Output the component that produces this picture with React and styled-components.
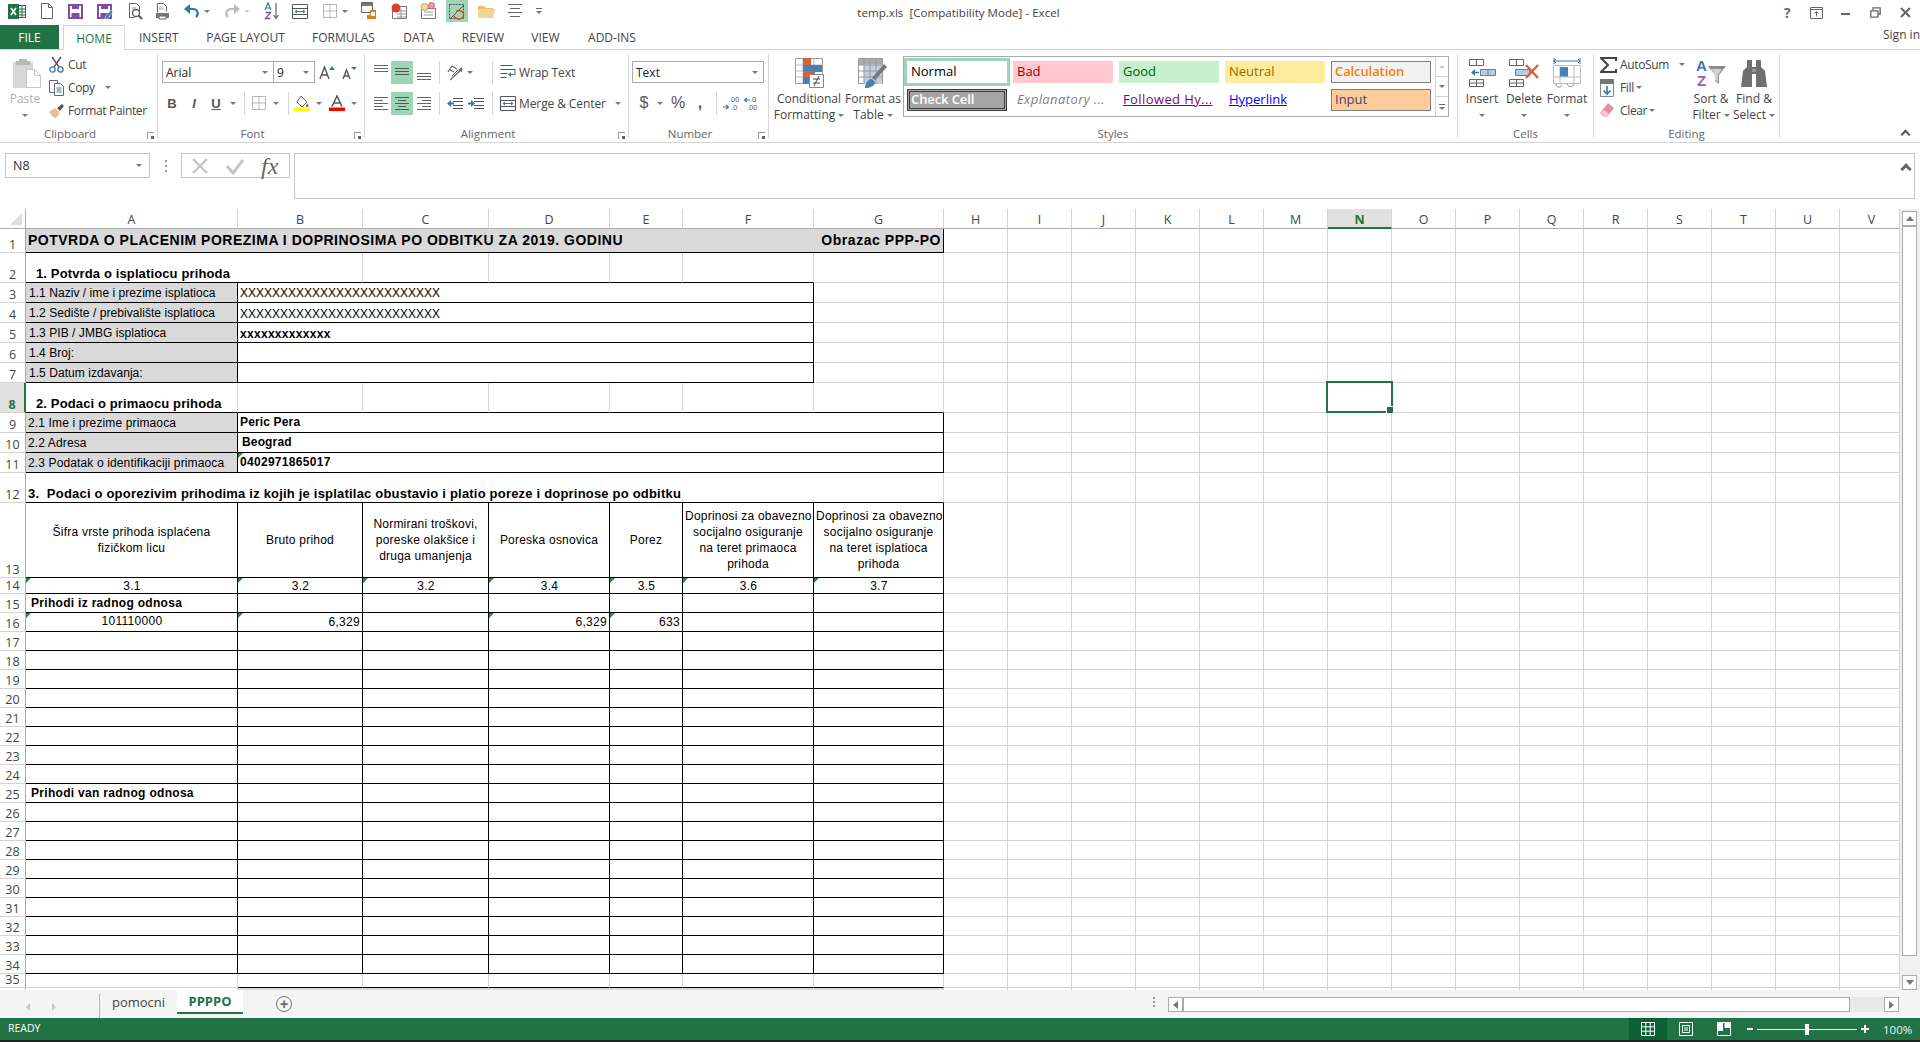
import React from "react";
import styled, { createGlobalStyle } from "styled-components";

const UI = `"Open Sans", "Noto Sans", sans-serif`;
const SHEET = `"Liberation Sans", Arial, sans-serif`;
const GREEN = "#217346";
const ACTIVE = "#9fd5b7";
const LINE = "#d4d4d4";

const GlobalStyle = createGlobalStyle`
  html, body { margin: 0; padding: 0; background: #fff; overflow: hidden; }
  * { box-sizing: border-box; }
`;

/* ---------- icons ---------- */
const Svg = styled.svg`
  display: block;
  flex: none;
`;
const Ic = ({ w = 16, h = 16, children }) => (
  <Svg width={w} height={h} viewBox={`0 0 ${w} ${h}`} fill="none">
    {children}
  </Svg>
);

const ExcelLogo = () => (
  <Ic w={18} h={15}>
    <rect x="7.5" y="1.5" width="10" height="12" fill="#fff" stroke="#217346" />
    <path d="M11 5h6M11 8h6M11 11h6M14 2v11" stroke="#217346" />
    <rect x="0" y="0" width="11" height="15" fill="#217346" />
    <path d="M3 4l5 7M8 4l-5 7" stroke="#fff" strokeWidth="1.7" />
  </Ic>
);
const NewPage = () => (
  <Ic w={12} h={16}>
    <path d="M.5.5h7l4 4v11H.5z M7.5.5v4h4" stroke="#666" fill="#fff" />
  </Ic>
);
const SaveIc = ({ pen }) => (
  <Ic w={16} h={15}>
    <path d="M1 1h13v13H1z" stroke="#7e4ea3" strokeWidth="2" fill="#fff" />
    <path d="M4 1h7v4H4z M3.5 9h8v5h-8z" fill="#7e4ea3" />
    {pen && <path d="M8 13l6-7 2 2-6 7H8z" fill="#3a76b5" stroke="#fff" strokeWidth=".5" />}
  </Ic>
);
const PreviewIc = () => (
  <Ic w={15} h={17}>
    <path d="M1.5.5h7l3 3v6 M1.5.5v14h5" stroke="#666" fill="#fff" />
    <circle cx="8" cy="10" r="3.5" stroke="#555" strokeWidth="1.3" fill="#fff" />
    <path d="M10.5 12.5l3.5 3.5" stroke="#555" strokeWidth="2" />
    <path d="M4 5h4M4 7h2" stroke="#999" />
  </Ic>
);
const PrintIc = () => (
  <Ic w={16} h={17}>
    <path d="M2.5.5h6l3 3v5 M2.5.5v9" stroke="#666" />
    <path d="M1 10h13v5H1z" fill="#777" />
    <path d="M4 13h7v3H4z" fill="#fff" stroke="#666" />
    <path d="M4 4h4M4 6h5" stroke="#aaa" />
  </Ic>
);
const UndoIc = ({ c = "#2e75b6" }) => (
  <Ic w={16} h={14}>
    <path d="M3 5h6a4.5 4.5 0 0 1 3 8" stroke={c} strokeWidth="2.2" />
    <path d="M6 0v10L0 5z" fill={c} />
  </Ic>
);
const RedoIc = () => (
  <Ic w={16} h={14}>
    <path d="M13 5H7a4.5 4.5 0 0 0-3 8" stroke="#bcbcbc" strokeWidth="2.2" />
    <path d="M10 0v10l6-5z" fill="#bcbcbc" />
  </Ic>
);
const SortAz = () => (
  <Ic w={16} h={18}>
    <path d="M1 8l3-7 3 7M2.2 6h3.6" stroke="#3a76b5" strokeWidth="1.2" />
    <path d="M1.5 10.5h5L1.5 16.5h5" stroke="#7e4ea3" strokeWidth="1.3" />
    <path d="M12 1v15M9.5 13l2.5 3.5 2.5-3.5" stroke="#666" strokeWidth="1.2" />
  </Ic>
);
const MergeIc = () => (
  <Ic w={16} h={15}>
    <path d="M.5.5h15v14H.5zM.5 4.5h15M.5 10.5h15" stroke="#555" />
    <path d="M3 7.5h10" stroke="#3a76b5" />
    <path d="M5 5.5l-2.5 2 2.5 2zM11 5.5l2.5 2-2.5 2z" fill="#3a76b5" />
  </Ic>
);
const BorderIc = () => (
  <Ic w={14} h={14}>
    <path d="M.5.5h13v13H.5zM7 .5v13M.5 7h13" stroke="#777" strokeDasharray="1 1" />
  </Ic>
);
const QatPhone = () => (
  <Ic w={16} h={18}>
    <path d="M.5.5h11v10H.5z" stroke="#666" fill="#fff" />
    <path d="M1 1h10v3H1z" fill="#777" />
    <path d="M9 8h6v9H6v-4h3z" fill="#e07b1a" />
    <path d="M10 10h4v4h-4z" fill="#fff" />
  </Ic>
);
const QatSheet = () => (
  <Ic w={17} h={17}>
    <path d="M1.5 3.5h14v12h-14z" stroke="#777" fill="#fff" />
    <path d="M6 8h9M6 11h9M6 14h9M10 6v9" stroke="#999" />
    <circle cx="5" cy="5" r="4.5" fill="#d5452c" />
  </Ic>
);
const QatBalloons = () => (
  <Ic w={17} h={18}>
    <path d="M1.5 6.5h14v10h-14z" stroke="#777" fill="#fff" />
    <path d="M4 10h9M4 13h9" stroke="#999" />
    <circle cx="4.5" cy="5" r="3.5" fill="#f1d6a6" stroke="#c9a264" />
    <circle cx="11.5" cy="3.5" r="3" fill="#e9a0ae" stroke="#c66" />
  </Ic>
);
const QatShape = () => (
  <Ic w={18} h={17}>
    <path d="M1.5 1.5h14v14h-14z" stroke="#555" strokeDasharray="2 1" />
    <path d="M2 16L16 2" stroke="#555" />
    <path d="M8 8c6-2 10 3 6 7-3 2-7 1-8-2" stroke="#d5452c" strokeWidth="1.3" />
  </Ic>
);
const FolderIc = () => (
  <Ic w={17} h={14}>
    <path d="M0 2h6l2 2h7v2H0z" fill="#e7bf71" />
    <path d="M0 5h17l-2 9H0z" fill="#f2d595" />
  </Ic>
);
const LinesIc = ({ rows, active }) => (
  <Ic w={14} h={16}>
    {rows.map(([x1, x2, y], i) => (
      <path key={i} d={`M${x1} ${y}.5H${x2}`} stroke={active ? "#555" : "#666"} />
    ))}
  </Ic>
);
const V_TOP = [[0, 14, 1], [0, 14, 4], [0, 14, 7]];
const V_MID = [[0, 14, 4], [0, 14, 7], [0, 14, 10]];
const V_BOT = [[0, 14, 9], [0, 14, 12], [0, 14, 15]];
const H_LEFT = [[0, 14, 2], [0, 9, 5], [0, 14, 8], [0, 9, 11], [0, 14, 14]];
const H_CENTER = [[0, 14, 2], [3, 11, 5], [0, 14, 8], [3, 11, 11], [0, 14, 14]];
const H_RIGHT = [[0, 14, 2], [5, 14, 5], [0, 14, 8], [5, 14, 11], [0, 14, 14]];

const ScissorsIc = () => (
  <Ic w={15} h={17}>
    <path d="M3 1l7 10M12 1L5 11" stroke="#555" strokeWidth="1.4" />
    <circle cx="3.5" cy="13.5" r="2.6" stroke="#3a76b5" strokeWidth="1.3" />
    <circle cx="11.5" cy="13.5" r="2.6" stroke="#3a76b5" strokeWidth="1.3" />
  </Ic>
);
const CopyIc = () => (
  <Ic w={16} h={16}>
    <path d="M.5.5h8v12h-8z" stroke="#666" fill="#fff" />
    <path d="M5.5 3.5h6l3 3v9h-9z" stroke="#666" fill="#fff" />
    <path d="M7.5 8h5M7.5 10h5M7.5 12h5" stroke="#3a76b5" />
  </Ic>
);
const PainterIc = () => (
  <Ic w={16} h={15}>
    <path d="M0 9l6-4 5 5-4 5-3-1-2-3z" fill="#e6c08e" />
    <path d="M8 5l5-4 2 2-4 5z" fill="#555" />
  </Ic>
);
const PasteIc = () => (
  <Ic w={28} h={30}>
    <path d="M0 4h20v26H0z" fill="#d8d6d6" />
    <path d="M6 1h8v2h3v4H3V3h3z" fill="#b9b7b7" />
    <path d="M13.5 11.5h8l6 6v12h-14z" fill="#fff" stroke="#c6c6c6" />
    <path d="M21.5 11.5v6h6" stroke="#c6c6c6" />
  </Ic>
);
const FontGrow = ({ small }) => (
  <Ic w={16} h={15}>
    <path
      d={small ? "M2 14l3.5-9 3.5 9M3.3 11h4.4" : "M1 14l4.5-12L10 14M2.8 10h5.4"}
      stroke="#555"
      strokeWidth="1.4"
    />
    <path d={small ? "M10 2h6l-3 3z" : "M10 5l3-4 3 4z"} fill="#3a76b5" />
  </Ic>
);
const FillIc = () => (
  <Ic w={16} h={16}>
    <path d="M7 1l6 6-5 5-5-5z" stroke="#666" fill="#fff" />
    <path d="M13 8c1.5 2 2 3 1 4s-2 0-2-1z" fill="#3a76b5" />
    <path d="M0 12.5h16V16H0z" fill="#ffff00" />
  </Ic>
);
const ColorA = () => (
  <Ic w={16} h={16}>
    <path d="M3 11.5L8 1l5 10.5M4.8 8h6.4" stroke="#555" strokeWidth="1.5" />
    <path d="M0 12.5h16V16H0z" fill="#ff0000" />
  </Ic>
);
const OrientIc = () => (
  <Ic w={17} h={17}>
    <path d="M1 8l4-6 5 3M3 6l4 2" stroke="#666" strokeWidth="1.2" />
    <path d="M5 12l6-6" stroke="#666" />
    <path d="M3 16L15 5" stroke="#666" strokeWidth="1.2" />
    <path d="M15 3v5l-4-2z" fill="#666" />
  </Ic>
);
const WrapIc = () => (
  <Ic w={16} h={16}>
    <path d="M.5 1.5h12M.5 5.5h15M.5 9.5h7M.5 13.5h6" stroke="#555" />
    <path d="M15 5.5v5h-5" stroke="#3a76b5" />
    <path d="M11 8l-3 2.5 3 2.5z" fill="#3a76b5" />
  </Ic>
);
const IndentIc = ({ inc }) => (
  <Ic w={16} h={13}>
    <path d="M6 1.5h10M6 4.5h10M6 8.5h10M6 11.5h10" stroke="#555" />
    {inc ? (
      <path d="M0 5.5h3V3l4 3.5L3 10V7.5H0z" fill="#3a76b5" />
    ) : (
      <path d="M7 5.5H4V3L0 6.5 4 10V7.5h3z" fill="#3a76b5" />
    )}
  </Ic>
);
const DecimalIc = ({ more }) => (
  <Ic w={16} h={15}>
    <text x="6" y="6" fontSize="7.5" fill="#555" fontFamily={SHEET}>{more ? ".00" : ".0"}</text>
    <text x={more ? 8 : 3} y="14" fontSize="7.5" fill="#555" fontFamily={SHEET}>{more ? ".0" : ".00"}</text>
    <path
      d={more ? "M0 11h5M3 9l2.5 2L3 13" : "M6 4H1M3 2L.5 4 3 6"}
      stroke="#3a76b5"
      strokeWidth="1.2"
    />
  </Ic>
);
const CondIc = () => (
  <Ic w={29} h={30}>
    <path d="M.5.5h27v25H.5z" stroke="#999" fill="#fff" />
    <path d="M8 .5v25M19 .5v25M.5 7h27M.5 13h27M.5 19h27" stroke="#bbb" />
    <path d="M8 0h8v7H8z" fill="#d8623b" />
    <path d="M8 7h19v7H8z" fill="#4a80b8" />
    <path d="M8 13h12v6H8z" fill="#d8623b" />
    <path d="M8 19h6v7H8z" fill="#4a80b8" />
    <path d="M14.5 16.5h14v13h-14z" fill="#fff" stroke="#888" />
    <path d="M18 21h7M18 25h7M24 18l-5 10" stroke="#444" />
  </Ic>
);
const TableIc = () => (
  <Ic w={30} h={30}>
    <path d="M.5.5h24v25H.5z" stroke="#999" fill="#fff" />
    <path d="M.5 1h24v6H.5z" fill="#aaa" />
    <path d="M6 6h18v20H6z" fill="#c0d0e4" />
    <path d="M6 .5v25M12 .5v25M18 .5v25M.5 7h24M.5 13h24M.5 19h24" stroke="#999" />
    <path d="M14 20l12-14 3 3-12 13z" fill="#777" />
    <path d="M7 30c0-5 3-9 7-9l3 3c0 4-5 6-10 6z" fill="#4a80b8" />
  </Ic>
);
const InsertIc = () => (
  <Ic w={27} h={28}>
    <path d="M.5.5h14v6H.5zM7.5.5v6" stroke="#666" />
    <path d="M11.5 10.5h15v6h-15zM19 10.5v6" stroke="#5f7f9f" fill="#b9cde2" />
    <path d="M10 13.5H5" stroke="#3a76b5" strokeWidth="1.5" />
    <path d="M6 10l-4 3.5L6 17z" fill="#3a76b5" />
    <path d="M.5 20.5h14v7H.5zM7.5 20.5v7M.5 24h14" stroke="#666" />
  </Ic>
);
const DeleteIc = () => (
  <Ic w={30} h={28}>
    <path d="M.5.5h14v6H.5zM7.5.5v6" stroke="#666" />
    <path d="M6.5 10.5h14v6h-14z" stroke="#5f7f9f" fill="#b9cde2" />
    <path d="M.5 20.5h14v7H.5zM7.5 20.5v7M.5 24h14" stroke="#666" />
    <path d="M17 6l12 13M29 6L17 19" stroke="#d8623b" strokeWidth="2.4" />
  </Ic>
);
const FormatIc = () => (
  <Ic w={28} h={32}>
    <path d="M1 4h26M1 1v6M27 1v6" stroke="#3a76b5" />
    <path d="M3 2L1 4l2 2M25 2l2 2-2 2" stroke="#3a76b5" />
    <path d="M.5 8.5h27v18H.5z" stroke="#bbb" fill="#fff" />
    <path d="M7 8.5v18M21 8.5v18M.5 20h27" stroke="#bbb" />
    <path d="M7 10h8v9.5H7z" fill="#4a80b8" />
    <path d="M3 27c0 4 5 4 6 1M14 27c2 4 6 3 7 0" stroke="#888" />
  </Ic>
);
const SigmaIc = () => (
  <Ic w={17} h={16}>
    <path d="M16 4V1H1l7 7-7 7h15v-3" stroke="#444" strokeWidth="2" />
  </Ic>
);
const FillDownIc = () => (
  <Ic w={14} h={18}>
    <path d="M.5.5h13v17H.5z" stroke="#888" fill="#fff" />
    <path d="M0 0h14v5H0z" fill="#777" />
    <path d="M7 7v8M3.5 11.5L7 15l3.5-3.5" stroke="#2e75b6" strokeWidth="1.6" />
  </Ic>
);
const EraserIc = () => (
  <Ic w={14} h={15}>
    <path d="M8 0l6 5-7 9H4L0 10z" fill="#e88ea0" />
    <path d="M0 10l4 4h3l2-3-5-4z" fill="#f3c5cf" />
  </Ic>
);
const SortFilterIc = () => (
  <Ic w={30} h={29}>
    <text x="0" y="13" fontSize="15" fontWeight="700" fill="#3a76b5" fontFamily={SHEET}>A</text>
    <text x="1" y="28" fontSize="15" fontWeight="700" fill="#8f5fb5" fontFamily={SHEET}>Z</text>
    <path d="M12 8h18l-7 9v9l-4-3v-6z" fill="#8c8c8c" />
    <path d="M19 17l-4-6h11l-4 6v7l-3-2z" fill="#cfcfcf" />
  </Ic>
);
const BinocularsIc = () => (
  <Ic w={26} h={28}>
    <path d="M6 1h5v7h4V1h5v7l4 4 2 16H15V15h-4v13H0l2-16 4-4z" fill="#6f6f6f" />
    <path d="M11 10h4v3h-4z" fill="#9a9a9a" />
  </Ic>
);
const NormalViewIc = () => (
  <Ic w={14} h={14}>
    <path d="M.5.5h13v13H.5zM4.8.5v13M9.2.5v13M.5 4.8h13M.5 9.2h13" stroke="#fff" />
  </Ic>
);
const LayoutViewIc = () => (
  <Ic w={14} h={14}>
    <path d="M.5.5h13v13H.5z" stroke="#fff" />
    <path d="M3.5 3.5h7v7h-7zM5 6h4M5 8h4" stroke="#fff" />
  </Ic>
);
const BreakViewIc = () => (
  <Ic w={14} h={14}>
    <path d="M.5.5h13v13H.5z" stroke="#fff" />
    <path d="M0 0h6v9H0zM7.5 0H14v6H7.5z" fill="#fff" />
  </Ic>
);

/* ---------- window chrome ---------- */
const Page = styled.div`
  width: 1920px;
  height: 1042px;
  display: flex;
  flex-direction: column;
  overflow: hidden;
  background: #fff;
  font-family: ${UI};
`;
const TitleBar = styled.div`
  height: 25px;
  display: grid;
  grid-template-columns: 1fr auto 1fr;
  align-items: center;
  padding-right: 3px;
`;
const Qat = styled.div`
  display: flex;
  align-items: flex-start;
  height: 25px;
  padding-left: 3px;
`;
const QatBtn = styled.div`
  width: ${(p) => p.$w}px;
  margin-left: ${(p) => p.$ml || 0}px;
  height: 22px;
  display: flex;
  align-items: center;
  justify-content: center;
  background: ${(p) => (p.$on ? ACTIVE : "transparent")};
`;
const Caret = styled.span`
  display: inline-block;
  flex: none;
  width: 0;
  height: 0;
  margin-left: ${(p) => p.$ml || 0}px;
  border-left: 3px solid transparent;
  border-right: 3px solid transparent;
  border-top: 3px solid ${(p) => p.$c || "#777"};
`;
const QatCaret = styled.div`
  width: 6px;
  margin-left: ${(p) => p.$ml || 0}px;
  height: 22px;
  display: flex;
  flex-direction: column;
  align-items: center;
  justify-content: center;
  gap: 2px;
`;
const QatDash = styled.span`
  width: 6px;
  height: 1px;
  background: #666;
`;
const Title = styled.div`
  font-size: 11.6px;
  color: #444;
  white-space: pre;
`;
const WinButtons = styled.div`
  display: flex;
  justify-content: flex-end;
  margin-right: -3px;
`;
const WinBtn = styled.div`
  width: 29.5px;
  height: 22px;
  display: flex;
  align-items: center;
  justify-content: center;
  color: #666;
  font-size: 14px;
  font-weight: 700;
`;

const TabBar = styled.div`
  height: 25px;
  display: flex;
  align-items: stretch;
  border-bottom: 1px solid ${LINE};
`;
const FileTab = styled.div`
  width: 59px;
  background: ${GREEN};
  color: #fff;
  font-size: 12px;
  display: flex;
  align-items: center;
  justify-content: center;
`;
const RibbonTab = styled.div`
  width: ${(p) => p.$w}px;
  margin-left: ${(p) => p.$ml || 0}px;
  display: flex;
  align-items: center;
  justify-content: center;
  font-size: 12px;
  color: ${(p) => (p.$on ? GREEN : "#444")};
  height: ${(p) => (p.$on ? "25px" : "24px")};
  background: #fff;
  border: ${(p) => (p.$on ? `1px solid ${LINE}` : "none")};
  border-bottom: none;
`;
const SignIn = styled.div`
  margin-left: auto;
  margin-top: -1px;
  margin-bottom: 5px;
  font-size: 12px;
  color: #444;
  align-self: center;
`;

/* ---------- ribbon ---------- */
const Ribbon = styled.div`
  height: 93px;
  padding-top: 4px;
  display: flex;
  border-bottom: 1px solid ${LINE};
  position: relative;
`;
const Group = styled.div`
  width: ${(p) => p.$w}px;
  height: 84px;
  flex: none;
  display: flex;
  flex-direction: column;
  border-right: 1px solid ${LINE};
  position: relative;
`;
const GroupBody = styled.div`
  height: 72px;
  flex: none;
  display: flex;
  align-items: flex-start;
`;
const GroupLabel = styled.div`
  height: 16px;
  flex: none;
  padding-right: ${(p) => (p.$launcher ? 17 : 0)}px;
  line-height: 16px;
  text-align: center;
  font-size: 11.5px;
  color: #666;
`;
const Launcher = styled.span`
  position: absolute;
  right: 3px;
  bottom: -1px;
  width: 7px;
  height: 7px;
  border-left: 1px solid #999;
  border-top: 1px solid #999;
  &::after {
    content: "";
    position: absolute;
    right: 0;
    bottom: 0;
    width: 3px;
    height: 3px;
    background: #666;
  }
`;
const Collapse = styled.span`
  position: absolute;
  right: 11px;
  bottom: 4px;
  width: 7px;
  height: 7px;
  border-left: 2px solid #555;
  border-top: 2px solid #555;
  transform: rotate(45deg);
`;
const PasteCol = styled.div`
  width: 49px;
  flex: none;
`;
const BigBtn = styled.div`
  width: ${(p) => p.$w}px;
  margin-left: ${(p) => p.$ml || 0}px;
  flex: none;
  display: flex;
  flex-direction: column;
  align-items: center;
  font-size: 12px;
  line-height: 16px;
  color: ${(p) => (p.$off ? "#b1b1b1" : "#444")};
  white-space: nowrap;
`;
const BigIcon = styled.div`
  height: 37px;
  padding-left: ${(p) => p.$pl || 0}px;
  display: flex;
  align-items: center;
  justify-content: center;
`;
const BigLine = styled.div`
  height: 16px;
  display: flex;
  align-items: center;
  justify-content: center;
`;
const SmallCol = styled.div`
  width: ${(p) => p.$w || 100}px;
  flex: none;
  margin-top: -1px;
  padding-left: ${(p) => p.$pl || 0}px;
`;
const SmallRow = styled.div`
  height: 23px;
  display: flex;
  align-items: center;
  font-size: 12px;
  letter-spacing: -0.35px;
  color: #444;
  white-space: nowrap;
`;
const IconSlot = styled.div`
  width: ${(p) => p.$w || 19}px;
  flex: none;
  display: flex;
  justify-content: flex-start;
`;
const Stack = styled.div`
  padding-top: 7px;
  display: flex;
  flex-direction: column;
  gap: 9px;
`;
const ToolRow = styled.div`
  height: 22px;
  display: flex;
  align-items: center;
  white-space: nowrap;
`;
const Combo = styled.div`
  width: ${(p) => p.$w}px;
  margin-left: ${(p) => p.$ml || 0}px;
  height: 22px;
  flex: none;
  border: 1px solid #ababab;
  margin-right: ${(p) => (p.$joined ? "-1px" : "0")};
  display: flex;
  align-items: center;
  justify-content: space-between;
  padding: 0 5px 0 3px;
  font-size: 12px;
  color: #222;
`;
const Tool = styled.div`
  width: ${(p) => p.$w}px;
  margin-left: ${(p) => p.$ml || 0}px;
  height: 23px;
  flex: none;
  display: flex;
  align-items: center;
  justify-content: center;
  background: ${(p) => (p.$on ? ACTIVE : "transparent")};
  color: #555;
  font-family: ${SHEET};
  font-size: ${(p) => (p.$big ? 16 : 13)}px;
  font-weight: ${(p) => (p.$b ? 700 : 400)};
  font-style: ${(p) => (p.$i ? "italic" : "normal")};
  text-decoration: ${(p) => (p.$u ? "underline" : "none")};
`;
const VSep = styled.span`
  width: 1px;
  height: 23px;
  flex: none;
  margin-left: ${(p) => p.$ml || 0}px;
  background: ${LINE};
`;
const ToolText = styled.span`
  font-size: 12px;
  letter-spacing: -0.1px;
  color: #444;
  margin-left: ${(p) => p.$ml || 0}px;
`;

const Gallery = styled.div`
  width: 546px;
  height: 61px;
  margin: 2px 0 0 3px;
  flex: none;
  border: 1px solid #ababab;
  display: flex;
  justify-content: space-between;
`;
const GalleryGrid = styled.div`
  display: grid;
  grid-template-columns: repeat(5, 100px);
  grid-auto-rows: 22px;
  gap: 6px;
  padding: 4px 0 0 3px;
`;
const StyleCell = styled.div`
  display: flex;
  align-items: center;
  padding: 0 0 2px ${(p) => p.$pl ?? 4}px;
  font-size: 13px;
  line-height: 16px;
  white-space: nowrap;
  color: ${(p) => p.$c};
  background: ${(p) => p.$bg || "transparent"};
  border: ${(p) => p.$bd || "none"};
  font-weight: ${(p) => (p.$b ? 600 : 400)};
  font-style: ${(p) => (p.$i ? "italic" : "normal")};
  letter-spacing: ${(p) => p.$ls || 0}px;
  box-shadow: ${(p) => (p.$on ? `0 0 0 3px ${ACTIVE}` : "none")};
`;
const UnderText = styled.span`
  text-decoration: underline;
`;
const GalleryScroll = styled.div`
  width: 13px;
  display: flex;
  flex-direction: column;
  border-left: 1px solid ${LINE};
`;
const GalleryBtn = styled.div`
  flex: 1;
  display: flex;
  flex-direction: column;
  gap: 2px;
  align-items: center;
  justify-content: center;
  border-bottom: ${(p) => (p.$last ? "none" : `1px solid ${LINE}`)};
`;
const UpTri = styled.span`
  width: 0;
  height: 0;
  border-left: 3px solid transparent;
  border-right: 3px solid transparent;
  border-bottom: 3px solid #ccc;
`;

/* ---------- formula bar ---------- */
const FormulaBar = styled.div`
  height: 66px;
  display: flex;
  align-items: flex-start;
  padding: 10px 5px 0;
`;
const NameBox = styled.div`
  width: 145px;
  height: 25px;
  flex: none;
  border: 1px solid #c6c6c6;
  display: flex;
  align-items: center;
  justify-content: space-between;
  padding: 0 7px;
  font-size: 12.5px;
  color: #333;
`;
const GripDots = styled.div`
  width: 31px;
  height: 25px;
  flex: none;
  display: flex;
  flex-direction: column;
  gap: 3px;
  align-items: center;
  justify-content: center;
`;
const Dot = styled.span`
  width: 2px;
  height: 2px;
  background: #999;
`;
const FxBox = styled.div`
  width: 109px;
  height: 25px;
  flex: none;
  border: 1px solid #c6c6c6;
  display: flex;
  align-items: center;
  gap: 16px;
  padding-left: 9px;
`;
const FxText = styled.span`
  font-family: "Liberation Serif", serif;
  font-style: italic;
  font-size: 24px;
  color: #666;
  line-height: 1;
  white-space: nowrap;
`;
const FormulaInput = styled.div`
  width: 1621px;
  height: 46px;
  margin-left: 4px;
  flex: none;
  border: 1px solid #c6c6c6;
  position: relative;
`;
const InputChevron = styled.span`
  position: absolute;
  right: 4px;
  top: 11px;
  width: 8px;
  height: 8px;
  border-left: 3px solid #666;
  border-top: 3px solid #666;
  transform: rotate(45deg);
`;

/* ---------- sheet ---------- */
const SheetArea = styled.div`
  height: 781px;
  display: flex;
`;
const Viewport = styled.div`
  width: 1900px;
  height: 781px;
  overflow: hidden;
  position: relative;
  border-right: 1px solid ${LINE};
`;
const Grid = styled.div`
  display: grid;
  width: max-content;
  grid-template-columns: ${(p) => p.$cols};
  grid-template-rows: ${(p) => p.$rows};
`;
const Corner = styled.div`
  border-right: 1px solid #ababab;
  border-bottom: 1px solid #ababab;
  display: flex;
  align-items: flex-end;
  justify-content: flex-end;
  padding: 0 3px 3px 0;
`;
const CornerTri = styled.span`
  width: 0;
  height: 0;
  border-left: 12px solid transparent;
  border-bottom: 12px solid #dfdfdf;
`;
const ColHead = styled.div`
  border-right: 1px solid ${LINE};
  border-bottom: ${(p) => (p.$on ? `2px solid ${GREEN}` : "1px solid #ababab")};
  background: ${(p) => (p.$on ? "#e1e1e1" : "#fff")};
  color: ${(p) => (p.$on ? GREEN : "#444")};
  font-weight: ${(p) => (p.$on ? 700 : 400)};
  font-size: 12.5px;
  padding-top: 2px;
  display: flex;
  align-items: center;
  justify-content: center;
`;
const RowHead = styled.div`
  border-right: ${(p) => (p.$on ? `2px solid ${GREEN}` : "1px solid #ababab")};
  border-bottom: 1px solid ${LINE};
  background: ${(p) => (p.$on ? "#e1e1e1" : "#fff")};
  color: ${(p) => (p.$on ? GREEN : "#444")};
  font-weight: ${(p) => (p.$on ? 700 : 400)};
  font-size: 12.5px;
  line-height: 12px;
  padding-bottom: 1px;
  display: flex;
  align-items: flex-end;
  justify-content: center;
  overflow: hidden;
`;
const Cell = styled.div`
  grid-column: span ${(p) => p.$span || 1};
  position: relative;
  min-width: 0;
  font-family: ${SHEET};
  font-size: ${(p) => p.$fs || 12}px;
  color: #000;
  line-height: 16px;
  white-space: pre;
  display: flex;
  padding: 0 2px ${(p) => p.$pb || 0}px ${(p) => p.$pl ?? 3}px;
  background: ${(p) => (p.$fill ? "#d9d9d9" : "#fff")};
  border-right: 1px solid ${(p) => (p.$box ? "#000" : LINE)};
  border-bottom: 1px solid ${(p) => (p.$under ? "#000" : LINE)};
  align-items: ${(p) => p.$v || "center"};
  justify-content: ${(p) => p.$h || "flex-start"};
  font-weight: ${(p) => (p.$b ? 700 : 400)};
  letter-spacing: ${(p) => p.$ls ?? 0.3}px;
  &::before {
    content: "";
    display: ${(p) => (p.$flag ? "block" : "none")};
    position: absolute;
    left: 0;
    top: 0;
    border-top: 5px solid #1f8a3a;
    border-right: 5px solid transparent;
  }
`;
const TitleText = styled.span`
  font-size: 14px;
  font-weight: 700;
  letter-spacing: ${(p) => p.$ls}px;
`;
const WrapText = styled.div`
  white-space: pre;
  text-align: center;
  width: 100%;
  letter-spacing: 0.22px;
`;
const Selection = styled.div`
  position: absolute;
  left: 1326px;
  top: 172px;
  width: 67px;
  height: 32px;
  border: 2px solid ${GREEN};
  pointer-events: none;
  &::after {
    content: "";
    position: absolute;
    right: -3px;
    bottom: -3px;
    width: 6px;
    height: 6px;
    background: ${GREEN};
    border: 1px solid #fff;
  }
`;

const VScroll = styled.div`
  width: 20px;
  padding: 2px 3px 0 2px;
  display: flex;
  flex-direction: column;
  background: #f0f0f0;
  height: 781px;
`;
const ScrollBtn = styled.div`
  width: 15px;
  height: 15px;
  flex: none;
  background: #fff;
  border: 1px solid #ababab;
  display: flex;
  align-items: center;
  justify-content: center;
`;
const Tri = styled.span`
  width: 0;
  height: 0;
  border: 4px solid transparent;
  ${(p) => p.$dir === "up" && "border-bottom: 5px solid #777; border-top: 0;"}
  ${(p) => p.$dir === "down" && "border-top: 5px solid #777; border-bottom: 0;"}
  ${(p) => p.$dir === "left" && "border-right: 5px solid #777; border-left: 0;"}
  ${(p) => p.$dir === "right" && "border-left: 5px solid #777; border-right: 0;"}
`;
const VThumb = styled.div`
  width: 15px;
  height: 730px;
  background: #fff;
  border: 1px solid #ababab;
`;
const VSpacer = styled.div`
  flex: 1;
`;

/* ---------- tabs + status ---------- */
const TabsBar = styled.div`
  height: 28px;
  background: #f4f4f4;
  display: flex;
  align-items: flex-start;
`;
const TabNav = styled.div`
  width: 100px;
  height: 25px;
  padding-left: 26px;
  display: flex;
  align-items: center;
  gap: 22px;
  border-right: 1px solid #b5b5b5;
  margin-top: 4px;
`;
const NavTri = styled.span`
  width: 0;
  height: 0;
  border-top: 4px solid transparent;
  border-bottom: 4px solid transparent;
  ${(p) => (p.$left ? "border-right: 4px solid #c8c8c8;" : "border-left: 4px solid #c8c8c8;")}
`;
const SheetTab = styled.div`
  height: 24px;
  width: ${(p) => p.$w}px;
  display: flex;
  align-items: center;
  justify-content: center;
  font-size: 13px;
  color: ${(p) => (p.$on ? GREEN : "#444")};
  font-weight: ${(p) => (p.$on ? 700 : 400)};
  background: ${(p) => (p.$on ? "#fff" : "transparent")};
  border-bottom: ${(p) => (p.$on ? `2px solid ${GREEN}` : "none")};
`;
const AddSheet = styled.div`
  width: 16px;
  height: 16px;
  margin: 6px 0 0 33px;
  border: 1px solid #777;
  border-radius: 50%;
  display: flex;
  align-items: center;
  justify-content: center;
  color: #666;
  font-family: ${SHEET};
  font-size: 14px;
  line-height: 1;
  font-weight: 700;
`;
const HDots = styled.div`
  margin-left: auto;
  margin-right: 6px;
  width: 16px;
  height: 14px;
  margin-top: 7px;
  display: flex;
  flex-direction: column;
  gap: 2px;
  align-items: center;
`;
const HScroll = styled.div`
  width: 731px;
  margin: 7px 21px 0 0;
  height: 15px;
  display: flex;
`;
const HThumb = styled.div`
  width: 667px;
  height: 15px;
  background: #fff;
  border: 1px solid #ababab;
`;
const HTrack = styled.div`
  flex: 1;
  background: #e9e9e9;
`;

const StatusBar = styled.div`
  height: 22px;
  background: ${GREEN};
  color: #fff;
  display: flex;
  align-items: center;
  padding: 0 0 0 8px;
  font-size: 10.5px;
`;
const StatusText = styled.span`
  margin-top: -2px;
`;
const StatusRight = styled.div`
  margin-left: auto;
  display: flex;
  align-items: center;
  height: 22px;
`;
const ViewBtn = styled.div`
  width: ${(p) => p.$w}px;
  height: 22px;
  display: flex;
  align-items: center;
  justify-content: center;
  background: ${(p) => (p.$on ? "#0a6332" : "transparent")};
`;
const ZoomSign = styled.span`
  width: ${(p) => p.$w}px;
  height: 2px;
  background: #fff;
  position: relative;
  margin-left: ${(p) => p.$ml}px;
  &::after {
    content: "";
    display: ${(p) => (p.$plus ? "block" : "none")};
    position: absolute;
    left: calc(50% - 1px);
    top: -3px;
    width: 2px;
    height: 8px;
    background: #fff;
  }
`;
const SliderTrack = styled.div`
  width: 100px;
  height: 1px;
  margin-left: 4px;
  background: #fff;
  position: relative;
`;
const SliderThumb = styled.span`
  position: absolute;
  left: 48px;
  top: -5px;
  width: 4px;
  height: 11px;
  background: #fff;
`;
const ZoomPct = styled.span`
  font-size: 11.5px;
  margin-left: 14px;
  width: 37px;
  color: #e8f2ec;
`;
const BottomEdge = styled.div`
  height: 2px;
  background: #222;
`;

/* ---------- data ---------- */
const COL_W = [212, 125, 126, 121, 73, 131, 130, ...Array(15).fill(64)];
const COL_NAMES = "ABCDEFGHIJKLMNOPQRSTUV".split("");
const TOTAL_COLS = COL_NAMES.length;
const ROW_H = [24, 30, 20, 20, 20, 20, 20, 30, 20, 20, 20, 30, 75, 16, 19, 19, ...Array(18).fill(19), 14, 19];

const TABS = [
  ["INSERT", 67.5],
  ["PAGE LAYOUT", 106],
  ["FORMULAS", 90],
  ["DATA", 60],
  ["REVIEW", 69],
  ["VIEW", 56],
  ["ADD-INS", 77],
];

const boxed = { $box: true, $under: true };
const label = (t, extra) => ({ t, $fill: true, ...boxed, $ls: 0.05, ...extra });
const heading = { $b: true, $v: "flex-end", $fs: 13, $under: true };
const XX = "XXXXXXXXXXXXXXXXXXXXXXXXX";

const seven = (vals = [], flags = [], extra = {}) =>
  vals.length
    ? vals.map((t, i) => ({ t, ...boxed, $flag: flags.includes(i), ...extra }))
    : Array.from({ length: 7 }, () => ({ ...boxed }));

const headers = [
  "Šifra vrste prihoda isplaćena\nfizičkom licu",
  "Bruto prihod",
  "Normirani troškovi,\nporeske olakšice i\ndruga umanjenja",
  "Poreska osnovica",
  "Porez",
  "Doprinosi za obavezno\nsocijalno osiguranje\nna teret primaoca\nprihoda",
  "Doprinosi za obavezno\nsocijalno osiguranje\nna teret isplatioca\nprihoda",
];

const withA = (t) => [{ t, ...boxed, $b: true, $pl: 5 }, ...Array.from({ length: 6 }, () => ({ ...boxed }))];

const buildRows = () => {
  const r = {};
  r[1] = [{ title: true, $span: 7, $fill: true, ...boxed, $pl: 2, $pb: 2 }];
  r[2] = [
    { t: "1. Potvrda o isplatiocu prihoda", $span: 2, ...heading, $pl: 10, $ls: 0.13 },
    { $under: true },
    { $under: true },
    { $under: true },
    { $under: true },
  ];
  r[3] = [label("1.1 Naziv / ime i prezime isplatioca"), { t: XX, $span: 5, ...boxed, $ls: 0, $pl: 2 }];
  r[4] = [label("1.2 Sedište / prebivalište isplatioca"), { t: XX, $span: 5, ...boxed, $ls: 0, $pl: 2, $v: "flex-end" }];
  r[5] = [label("1.3 PIB / JMBG isplatioca"), { t: "xxxxxxxxxxxxx", $span: 5, ...boxed, $b: true, $pl: 2, $v: "flex-end" }];
  r[6] = [label("1.4 Broj:"), { $span: 5, ...boxed }];
  r[7] = [label("1.5 Datum izdavanja:"), { $span: 5, ...boxed }];
  r[8] = [
    { t: "2. Podaci o primaocu prihoda", ...heading, $box: false, $pl: 10, $ls: 0.13 },
    ...Array.from({ length: 6 }, () => ({ $under: true })),
  ];
  r[9] = [label("2.1 Ime i prezime primaoca", { $pl: 2, $ls: 0.13 }), { t: "Peric Pera", $span: 6, ...boxed, $b: true, $ls: 0.15, $pl: 2, $pb: 2 }];
  r[10] = [label("2.2 Adresa", { $pl: 2, $ls: 0.13 }), { t: "Beograd", $span: 6, ...boxed, $b: true, $pl: 4, $ls: 0.15, $pb: 2 }];
  r[11] = [
    label("2.3 Podatak o identifikaciji primaoca", { $pl: 2, $ls: 0.13 }),
    { t: "0402971865017", $span: 6, ...boxed, $b: true, $flag: true, $pl: 2, $pb: 2 },
  ];
  r[12] = [
    {
      t: "3.  Podaci o oporezivim prihodima iz kojih je isplatilac obustavio i platio poreze i doprinose po odbitku",
      $span: 7,
      ...heading,
      $pl: 2,
      $ls: 0.2,
    },
  ];
  r[13] = headers.map((t) => ({ wrap: t, ...boxed, $pl: 2 }));
  r[14] = seven(["3.1", "3.2", "3.2", "3.4", "3.5", "3.6", "3.7"], [0, 1, 2, 3, 4, 5, 6], { $h: "center" });
  r[15] = withA("Prihodi iz radnog odnosa");
  r[16] = [
    { t: "101110000", ...boxed, $flag: true, $h: "center", $pb: 2 },
    { t: "6,329", ...boxed, $flag: true, $h: "flex-end" },
    { ...boxed },
    { t: "6,329", ...boxed, $flag: true, $h: "flex-end" },
    { t: "633", ...boxed, $flag: true, $h: "flex-end" },
    { ...boxed },
    { ...boxed },
  ];
  for (let n = 17; n <= 34; n++) r[n] = seven();
  r[25] = withA("Prihodi van radnog odnosa");
  r[35] = [{}, ...Array.from({ length: 6 }, () => ({ $under: true }))];
  r[36] = [{}, ...Array.from({ length: 6 }, () => ({ $fill: true }))];
  return r;
};

const SheetGrid = () => {
  const rows = buildRows();
  const colsTpl = ["26px", ...COL_W.map((w) => `${w}px`)].join(" ");
  const rowsTpl = ["20px", ...ROW_H.map((h) => `${h}px`)].join(" ");
  return (
    <Grid $cols={colsTpl} $rows={rowsTpl}>
      <Corner>
        <CornerTri />
      </Corner>
      {COL_NAMES.map((c) => (
        <ColHead key={c} $on={c === "N"}>
          {c}
        </ColHead>
      ))}
      {ROW_H.map((_, i) => {
        const n = i + 1;
        const spec = rows[n];
        const used = spec.reduce((s, c) => s + (c.$span || 1), 0);
        const rest = TOTAL_COLS - used;
        return (
          <React.Fragment key={n}>
            {/* row 36 only shows as a sliver, its number is out of view */}
            <RowHead $on={n === 8}>{n < 36 ? n : ""}</RowHead>
            {spec.map(({ t, wrap, title, ...props }, j) => (
              <Cell key={j} {...props} $h={title ? "space-between" : props.$h} $ls={title ? 0 : props.$ls}>
                {title ? (
                  <>
                    <TitleText $ls={0.5}>POTVRDA O PLACENIM POREZIMA I DOPRINOSIMA PO ODBITKU ZA 2019. GODINU</TitleText>
                    <TitleText $ls={0.55}>Obrazac PPP-PO</TitleText>
                  </>
                ) : wrap ? (
                  <WrapText>{wrap}</WrapText>
                ) : (
                  t
                )}
              </Cell>
            ))}
            {Array.from({ length: rest }, (_, k) => (
              <Cell key={`b${k}`} />
            ))}
          </React.Fragment>
        );
      })}
    </Grid>
  );
};

const Line2 = ({ children, caret }) => (
  <BigLine>
    {children}
    {caret && <Caret $ml={children ? 3 : 0} />}
  </BigLine>
);

export default function App() {
  return (
    <Page>
      <GlobalStyle />
      <TitleBar>
        <Qat>
          <QatBtn $w={28}><ExcelLogo /></QatBtn>
          <QatBtn $w={32}><NewPage /></QatBtn>
          <QatBtn $w={26}><SaveIc /></QatBtn>
          <QatBtn $w={32}><SaveIc pen /></QatBtn>
          <QatBtn $w={28}><PreviewIc /></QatBtn>
          <QatBtn $w={28}><PrintIc /></QatBtn>
          <QatBtn $w={24} $ml={3}><UndoIc /></QatBtn>
          <QatCaret><Caret /></QatCaret>
          <QatBtn $w={24} $ml={10}><RedoIc /></QatBtn>
          <QatCaret><Caret $c="#ccc" /></QatCaret>
          <QatBtn $w={28} $ml={8}><SortAz /></QatBtn>
          <QatBtn $w={28}><MergeIc /></QatBtn>
          <QatBtn $w={24} $ml={4}><BorderIc /></QatBtn>
          <QatCaret><Caret /></QatCaret>
          <QatBtn $w={26} $ml={8}><QatPhone /></QatBtn>
          <QatBtn $w={34}><QatSheet /></QatBtn>
          <QatBtn $w={24}><QatBalloons /></QatBtn>
          <QatBtn $w={22} $ml={6} $on><QatShape /></QatBtn>
          <QatBtn $w={36}><FolderIc /></QatBtn>
          <QatBtn $w={22}><LinesIc rows={[[0, 14, 1], [2, 12, 5], [0, 14, 9], [2, 12, 13]]} /></QatBtn>
          <QatCaret $ml={10}><QatDash /><Caret /></QatCaret>
        </Qat>
        <Title>temp.xls  [Compatibility Mode] - Excel</Title>
        <WinButtons>
          <WinBtn>?</WinBtn>
          <WinBtn>
            <Ic w={13} h={12}>
              <path d="M.5.5h12v11H.5zM.5 2.5h12M6.5 9.5V5M4.5 6.5l2-2 2 2" stroke="#666" />
            </Ic>
          </WinBtn>
          <WinBtn>
            <Ic w={10} h={10}><path d="M0 6h9" stroke="#666" strokeWidth="2" /></Ic>
          </WinBtn>
          <WinBtn>
            <Ic w={11} h={11}><path d="M3 3V.8h7.2V7H8M.8 3.8h7.2V10.2H.8z" stroke="#666" strokeWidth="1.3" /></Ic>
          </WinBtn>
          <WinBtn>
            <Ic w={11} h={11}><path d="M1 1l9 9M10 1l-9 9" stroke="#666" strokeWidth="2" /></Ic>
          </WinBtn>
        </WinButtons>
      </TitleBar>

      <TabBar>
        <FileTab>FILE</FileTab>
        <RibbonTab $w={62} $ml={4} $on>HOME</RibbonTab>
        {TABS.map(([name, w]) => (
          <RibbonTab key={name} $w={w}>{name}</RibbonTab>
        ))}
        <SignIn>Sign in</SignIn>
      </TabBar>

      <Ribbon>
        <Group $w={158}>
          <GroupBody>
            <PasteCol>
              <BigBtn $w={50} $off>
                <BigIcon $pl={4}><PasteIc /></BigIcon>
                <BigLine>Paste</BigLine>
                <Line2 caret />
              </BigBtn>
            </PasteCol>
            <SmallCol>
              <SmallRow><IconSlot><ScissorsIc /></IconSlot>Cut</SmallRow>
              <SmallRow><IconSlot><CopyIc /></IconSlot>Copy<Caret $ml={10} /></SmallRow>
              <SmallRow><IconSlot><PainterIc /></IconSlot>Format Painter</SmallRow>
            </SmallCol>
          </GroupBody>
          <GroupLabel $launcher>Clipboard</GroupLabel>
          <Launcher />
        </Group>

        <Group $w={207}>
          <GroupBody>
            <Stack>
              <ToolRow>
                <Combo $w={112} $ml={4} $joined>Arial<Caret /></Combo>
                <Combo $w={42}>9<Caret /></Combo>
                <Tool $w={22} $ml={1}><FontGrow /></Tool>
                <Tool $w={22}><FontGrow small /></Tool>
              </ToolRow>
              <ToolRow>
                <Tool $w={22} $ml={3} $b>B</Tool>
                <Tool $w={22} $i $b>I</Tool>
                <Tool $w={22} $b $u>U</Tool>
                <Tool $w={12}><Caret /></Tool>
                <VSep $ml={5} />
                <Tool $w={28}><BorderIc /></Tool>
                <Tool $w={6}><Caret /></Tool>
                <VSep $ml={9} />
                <Tool $w={26}><FillIc /></Tool>
                <Tool $w={8}><Caret /></Tool>
                <Tool $w={28}><ColorA /></Tool>
                <Tool $w={6}><Caret /></Tool>
              </ToolRow>
            </Stack>
          </GroupBody>
          <GroupLabel $launcher>Font</GroupLabel>
          <Launcher />
        </Group>

        <Group $w={264}>
          <GroupBody>
            <Stack>
              <ToolRow>
                <Tool $w={20} $ml={6}><LinesIc rows={V_TOP} /></Tool>
                <Tool $w={22} $on><LinesIc rows={V_MID} active /></Tool>
                <Tool $w={22}><LinesIc rows={V_BOT} /></Tool>
                <VSep $ml={4} />
                <Tool $w={24} $ml={3}><OrientIc /></Tool>
                <Tool $w={6}><Caret /></Tool>
                <VSep $ml={19} />
                <Tool $w={16} $ml={7}><WrapIc /></Tool>
                <ToolText $ml={3}>Wrap Text</ToolText>
              </ToolRow>
              <ToolRow>
                <Tool $w={20} $ml={6}><LinesIc rows={H_LEFT} /></Tool>
                <Tool $w={22} $on><LinesIc rows={H_CENTER} active /></Tool>
                <Tool $w={22}><LinesIc rows={H_RIGHT} /></Tool>
                <VSep $ml={4} />
                <Tool $w={20} $ml={5}><IndentIc /></Tool>
                <Tool $w={22}><IndentIc inc /></Tool>
                <VSep $ml={5} />
                <Tool $w={16} $ml={7}><MergeIc /></Tool>
                <ToolText $ml={3}>Merge & Center</ToolText>
                <Caret $ml={9} />
              </ToolRow>
            </Stack>
          </GroupBody>
          <GroupLabel $launcher>Alignment</GroupLabel>
          <Launcher />
        </Group>

        <Group $w={140}>
          <GroupBody>
            <Stack>
              <ToolRow>
                <Combo $w={132} $ml={3}>Text<Caret /></Combo>
              </ToolRow>
              <ToolRow>
                <Tool $w={20} $ml={5} $big>$</Tool>
                <Tool $w={12}><Caret /></Tool>
                <Tool $w={24} $big>%</Tool>
                <Tool $w={20} $b $big>,</Tool>
                <VSep $ml={6} />
                <Tool $w={19} $ml={4}><DecimalIc more /></Tool>
                <Tool $w={20} $ml={2}><DecimalIc /></Tool>
              </ToolRow>
            </Stack>
          </GroupBody>
          <GroupLabel $launcher>Number</GroupLabel>
          <Launcher />
        </Group>

        <Group $w={689}>
          <GroupBody>
            <BigBtn $w={74} $ml={3}>
              <BigIcon><CondIc /></BigIcon>
              <BigLine>Conditional</BigLine>
              <Line2 caret>Formatting</Line2>
            </BigBtn>
            <BigBtn $w={54}>
              <BigIcon><TableIc /></BigIcon>
              <BigLine>Format as</BigLine>
              <Line2 caret>Table</Line2>
            </BigBtn>
            <Gallery>
              <GalleryGrid>
                <StyleCell $c="#000" $bg="#fff" $on>Normal</StyleCell>
                <StyleCell $c="#9c0006" $bg="#ffc7ce">Bad</StyleCell>
                <StyleCell $c="#006100" $bg="#c6efce">Good</StyleCell>
                <StyleCell $c="#9c6500" $bg="#ffeb9c">Neutral</StyleCell>
                <StyleCell $c="#fa7d00" $bg="#f2f2f2" $bd="1px solid #7f7f7f" $b $ls={-0.1} $pl={3}>Calculation</StyleCell>
                <StyleCell $c="#fff" $bg="#a5a5a5" $bd="3px double #3f3f3f" $b $pl={1} $ls={-0.1}>Check Cell</StyleCell>
                <StyleCell $c="#7f7f7f" $i $ls={0.4}>Explanatory ...</StyleCell>
                <StyleCell $c="#800080" $ls={0.4}><UnderText>Followed Hy...</UnderText></StyleCell>
                <StyleCell $c="#0000ff"><UnderText>Hyperlink</UnderText></StyleCell>
                <StyleCell $c="#3f3f76" $bg="#ffcc99" $bd="1px solid #7f7f7f" $pl={3}>Input</StyleCell>
              </GalleryGrid>
              <GalleryScroll>
                <GalleryBtn><UpTri /></GalleryBtn>
                <GalleryBtn><Caret /></GalleryBtn>
                <GalleryBtn $last><QatDash /><Caret /></GalleryBtn>
              </GalleryScroll>
            </Gallery>
          </GroupBody>
          <GroupLabel>Styles</GroupLabel>
        </Group>

        <Group $w={136}>
          <GroupBody>
            <BigBtn $w={40} $ml={4}>
              <BigIcon><InsertIc /></BigIcon>
              <BigLine>Insert</BigLine>
              <Line2 caret />
            </BigBtn>
            <BigBtn $w={44}>
              <BigIcon><DeleteIc /></BigIcon>
              <BigLine>Delete</BigLine>
              <Line2 caret />
            </BigBtn>
            <BigBtn $w={42}>
              <BigIcon><FormatIc /></BigIcon>
              <BigLine>Format</BigLine>
              <Line2 caret />
            </BigBtn>
          </GroupBody>
          <GroupLabel>Cells</GroupLabel>
        </Group>

        <Group $w={186}>
          <GroupBody>
            <SmallCol $w={100} $pl={6}>
              <SmallRow><IconSlot $w={20}><SigmaIc /></IconSlot>AutoSum<Caret $ml={10} /></SmallRow>
              <SmallRow><IconSlot $w={20}><FillDownIc /></IconSlot>Fill<Caret $ml={2} /></SmallRow>
              <SmallRow><IconSlot $w={20}><EraserIc /></IconSlot>Clear<Caret $ml={2} /></SmallRow>
            </SmallCol>
            <BigBtn $w={34}>
              <BigIcon><SortFilterIc /></BigIcon>
              <BigLine>Sort &</BigLine>
              <Line2 caret>Filter</Line2>
            </BigBtn>
            <BigBtn $w={52}>
              <BigIcon><BinocularsIc /></BigIcon>
              <BigLine>Find &</BigLine>
              <Line2 caret>Select</Line2>
            </BigBtn>
          </GroupBody>
          <GroupLabel>Editing</GroupLabel>
        </Group>
        <Collapse />
      </Ribbon>

      <FormulaBar>
        <NameBox>N8<Caret /></NameBox>
        <GripDots><Dot /><Dot /><Dot /></GripDots>
        <FxBox>
          <Ic w={18} h={18}><path d="M2 2l14 14M16 2L2 16" stroke="#c6c6c6" strokeWidth="2.4" /></Ic>
          <Ic w={20} h={18}><path d="M2 9l6 7L18 3" stroke="#c6c6c6" strokeWidth="3" /></Ic>
          <FxText>fx</FxText>
        </FxBox>
        <FormulaInput><InputChevron /></FormulaInput>
      </FormulaBar>

      <SheetArea>
        <Viewport>
          <SheetGrid />
          <Selection />
        </Viewport>
        <VScroll>
          <ScrollBtn><Tri $dir="up" /></ScrollBtn>
          <VThumb />
          <VSpacer />
          <ScrollBtn><Tri $dir="down" /></ScrollBtn>
        </VScroll>
      </SheetArea>

      <TabsBar>
        <TabNav><NavTri $left /><NavTri /></TabNav>
        <SheetTab $w={77}>pomocni</SheetTab>
        <SheetTab $w={66} $on>PPPPO</SheetTab>
        <AddSheet>+</AddSheet>
        <HDots><Dot /><Dot /><Dot /></HDots>
        <HScroll>
          <ScrollBtn><Tri $dir="left" /></ScrollBtn>
          <HThumb />
          <HTrack />
          <ScrollBtn><Tri $dir="right" /></ScrollBtn>
        </HScroll>
      </TabsBar>

      <StatusBar>
        <StatusText>READY</StatusText>
        <StatusRight>
          <ViewBtn $w={38} $on><NormalViewIc /></ViewBtn>
          <ViewBtn $w={38}><LayoutViewIc /></ViewBtn>
          <ViewBtn $w={38}><BreakViewIc /></ViewBtn>
          <ZoomSign $w={6} $ml={4} />
          <SliderTrack><SliderThumb /></SliderTrack>
          <ZoomSign $w={8} $ml={4} $plus />
          <ZoomPct>100%</ZoomPct>
        </StatusRight>
      </StatusBar>
      <BottomEdge />
    </Page>
  );
}
